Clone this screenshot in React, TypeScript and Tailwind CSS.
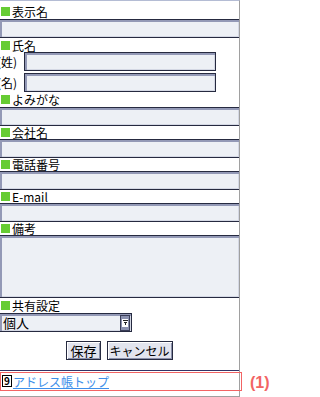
import React from "react";

const field =
  "block border border-[#262a40] bg-[#edf0f5] shadow-[inset_2px_2px_0_#9399b6,inset_-1px_-1px_0_#d4d8e4]";

function Label({ text, h }: { text: string; h: string }) {
  return (
    <div className={`flex items-center gap-[2px] whitespace-nowrap ${h}`}>
      <span className="ml-[1px] inline-block w-[9px] h-[9px] bg-[#66cc33]" />
      <span className="leading-[13px]">{text}</span>
    </div>
  );
}

function NameRow({ text }: { text: string }) {
  return (
    <div className="flex items-center">
      <span className="flex w-[24px] justify-end pr-[7px] whitespace-nowrap leading-[13px]">
        {text}
      </span>
      <div className={`${field} w-[192px] h-[19px]`} />
    </div>
  );
}

export default function App() {
  return (
    <div className="relative w-[280px] h-[397px] bg-white text-[12px] text-black font-['Noto_Sans_CJK_JP',sans-serif]">
      {/* phone screen */}
      <div className="w-[240px] h-[397px] overflow-hidden border-r border-b border-[#a0a0a0] border-t border-t-[#b4bcd4]">
        <div className="pt-[3px]">
          <Label text="表示名" h="h-[15px]" />
        </div>
        <div className={`${field} -ml-[1px] w-[241px] h-[19px]`} />

        <Label text="氏名" h="h-[14px]" />
        <div className="flex flex-col gap-[2px]">
          <NameRow text="(姓)" />
          <NameRow text="(名)" />
        </div>

        <Label text="よみがな" h="h-[15px]" />
        <div className={`${field} -ml-[1px] w-[241px] h-[19px]`} />

        <Label text="会社名" h="h-[13px]" />
        <div className={`${field} -ml-[1px] w-[241px] h-[19px]`} />

        <Label text="電話番号" h="h-[13px]" />
        <div className={`${field} -ml-[1px] w-[241px] h-[19px]`} />

        <Label text="E-mail" h="h-[13px]" />
        <div className={`${field} -ml-[1px] w-[241px] h-[19px]`} />

        <Label text="備考" h="h-[13px]" />
        <div className={`${field} -ml-[1px] w-[241px] h-[63px]`} />

        <Label text="共有設定" h="h-[15px]" />
        <div
          className={`${field} -ml-[1px] w-[133px] h-[19px] flex items-center justify-between pl-[3px] pr-[1px]`}
        >
          <span className="text-[13px] leading-[13px]">個人</span>
          <span className="flex items-center justify-center w-[10px] h-[16px] bg-[#8a90ae] border border-[#3a3e58]">
            <span className="flex items-center justify-center w-[6px] h-[8px] bg-white">
              <svg width="5" height="5" viewBox="0 0 5 5">
                <rect x="0" y="0" width="5" height="1" fill="#222" />
                <rect x="1" y="2" width="3" height="1" fill="#222" />
                <rect x="2" y="3" width="1" height="2" fill="#222" />
              </svg>
            </span>
          </span>
        </div>

        <div className="flex justify-center gap-[6px] mt-[9px]">
          <button className="h-[19px] px-[3px] text-[13px] leading-[13px] border border-[#262a40] bg-[#e2e4ee] shadow-[inset_1px_1px_0_#ffffff,inset_-1px_-1px_0_#8a90aa]">
            保存
          </button>
          <button className="h-[19px] px-[2px] text-[12px] leading-[13px] border border-[#262a40] bg-[#e2e4ee] shadow-[inset_1px_1px_0_#ffffff,inset_-1px_-1px_0_#8a90aa]">
            キャンセル
          </button>
        </div>

        <div className="mt-[10px] h-[1px] bg-[#333366]" />

        <div className="flex items-center h-[20px] pl-[2px] gap-[1px]">
          <span className="flex items-center justify-center w-[10px] h-[12px] border border-black text-[10px] leading-[10px] font-bold">
            9
          </span>
          <a href="#" className="text-[#3d8fea] underline leading-[13px]">
            アドレス帳トップ
          </a>
        </div>
      </div>

      {/* annotation overlay */}
      <div className="absolute left-0 top-[372px] w-[242px] h-[19px] border border-[#f26464]" />
      <span className="absolute left-[250px] top-[371px] text-[16px] font-bold text-[#f26464] font-['Liberation_Sans',sans-serif]">
        (1)
      </span>
    </div>
  );
}
